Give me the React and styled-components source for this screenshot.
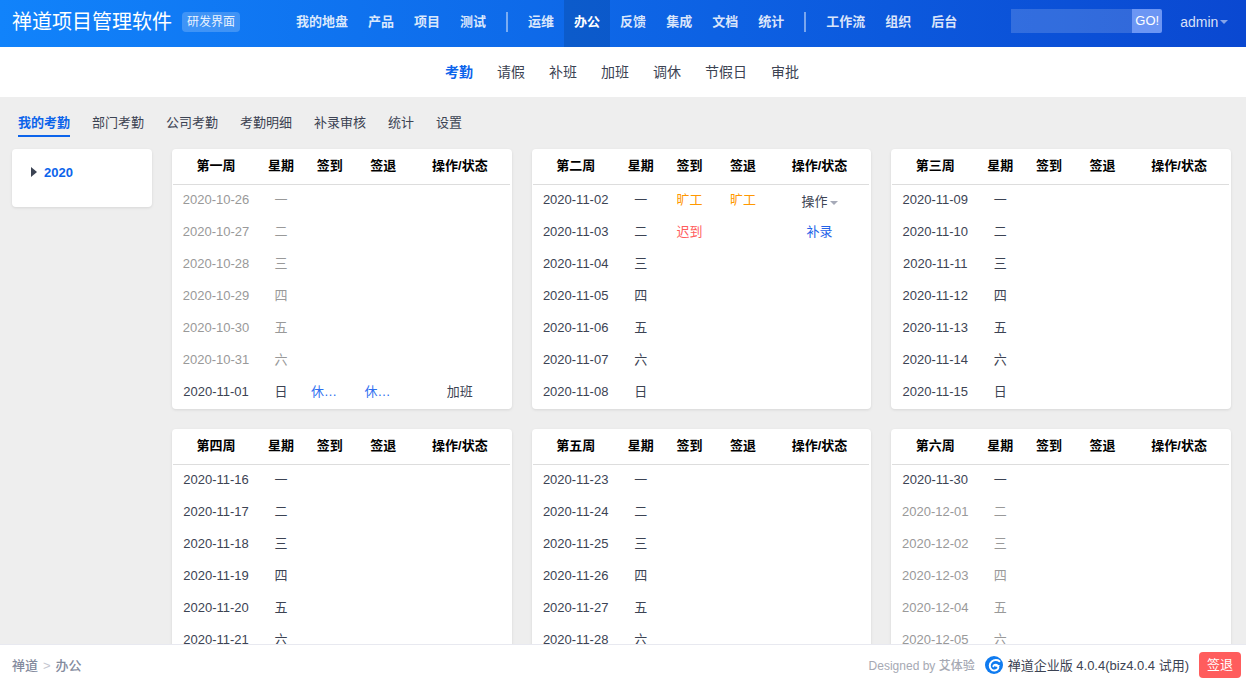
import React from "react";
import styled, { createGlobalStyle } from "styled-components";

const GlobalStyle = createGlobalStyle`
  html, body {
    margin: 0;
    height: 100%;
    overflow: hidden;
  }
  body {
    font-family: "Liberation Sans", "Noto Sans CJK SC", sans-serif;
    font-size: 13px;
    color: #3c4353;
    background: #eee;
  }
`;

const mainNav = [
  ["我的地盘", "产品", "项目", "测试"],
  ["运维", "办公", "反馈", "集成", "文档", "统计"],
  ["工作流", "组织", "后台"],
];
const subNav = ["考勤", "请假", "补班", "加班", "调休", "节假日", "审批"];
const tabs = ["我的考勤", "部门考勤", "公司考勤", "考勤明细", "补录审核", "统计", "设置"];
const weekdays = ["一", "二", "三", "四", "五", "六", "日"];
const weekNames = ["第一周", "第二周", "第三周", "第四周", "第五周", "第六周"];

const marks = {
  "2020-11-01": { in: "休息日", out: "休息日", tone: "rest", action: "加班" },
  "2020-11-02": { in: "旷工", out: "旷工", tone: "absent", menu: true },
  "2020-11-03": { in: "迟到", inTone: "late", link: "补录" },
};

const dateAt = (offset) => {
  const d = new Date(Date.UTC(2020, 9, 26 + offset));
  return d.toISOString().slice(0, 10);
};

function App() {
  return (
    <Page>
      <GlobalStyle />
      <Header>
        <Brand>禅道项目管理软件</Brand>
        <Badge>研发界面</Badge>
        <MainNav>
          {mainNav.map((group, i) => (
            <React.Fragment key={i}>
              {i > 0 && <NavDivider />}
              {group.map((item) => (
                <NavItem key={item} $active={item === "办公"}>
                  {item}
                </NavItem>
              ))}
            </React.Fragment>
          ))}
        </MainNav>
        <Search>
          <SearchInput />
          <SearchButton>GO!</SearchButton>
        </Search>
        <User>
          admin
          <UserCaret />
        </User>
      </Header>

      <SubNav>
        {subNav.map((item) => (
          <SubNavItem key={item} $active={item === "考勤"}>
            {item}
          </SubNavItem>
        ))}
      </SubNav>

      <Main>
        <Tabs>
          {tabs.map((tab, i) => (
            <Tab key={tab} $active={i === 0}>
              {tab}
            </Tab>
          ))}
        </Tabs>
        <Content>
          <Sidebar>
            <YearArrow />
            <Year>2020</Year>
          </Sidebar>
          <Weeks>
            {weekNames.map((name, w) => (
              <WeekCard key={name}>
                <HeadRow>
                  <span>{name}</span>
                  <span>星期</span>
                  <span>签到</span>
                  <span>签退</span>
                  <span>操作/状态</span>
                </HeadRow>
                {weekdays.map((day, d) => {
                  const offset = w * 7 + d;
                  const date = dateAt(offset);
                  const mark = marks[date] || {};
                  const muted = offset < 6 || offset > 35;
                  return (
                    <Row key={date} $muted={muted}>
                      <span>{date}</span>
                      <span>{day}</span>
                      <Status $tone={mark.inTone || mark.tone}>{mark.in}</Status>
                      <Status $tone={mark.tone}>{mark.out}</Status>
                      <span>
                        {mark.action}
                        {mark.link && <RowLink>{mark.link}</RowLink>}
                        {mark.menu && (
                          <RowMenu>
                            操作
                            <MenuCaret />
                          </RowMenu>
                        )}
                      </span>
                    </Row>
                  );
                })}
              </WeekCard>
            ))}
          </Weeks>
        </Content>
      </Main>

      <Footer>
        <Crumbs>
          禅道<CrumbSep>&gt;</CrumbSep>办公
        </Crumbs>
        <FooterRight>
          <Designed>
            Designed by <b>艾体验</b>
          </Designed>
          <Version>
            <svg width="18" height="18" viewBox="0 0 18 18">
              <circle cx="9" cy="9" r="9" fill="#0f7bf0" />
              <path
                d="M14.5 5.2C12.6 3.6 9 3.6 6.8 5.4 4.2 7.5 4.1 11.4 6.4 13.4c2 1.700 5.200 1.400 6.500-.6.900-1.500.4-3.300-1.200-3.900-1.300-.5-3 0-3.300 1.300"
                fill="none"
                stroke="#fff"
                strokeWidth="2"
                strokeLinecap="round"
              />
              <path d="M9.500 9h5.500l-1.500 1.800h-3z" fill="#fff" />
            </svg>
            禅道企业版 4.0.4(biz4.0.4 试用)
          </Version>
          <SignOut>签退</SignOut>
        </FooterRight>
      </Footer>
    </Page>
  );
}

const Page = styled.div`
  display: flex;
  flex-direction: column;
  height: 100vh;
  overflow: hidden;
`;

const Header = styled.header`
  flex: none;
  display: flex;
  align-items: center;
  box-sizing: border-box;
  height: 47px;
  padding: 0 0 3px 12px;
  color: #fff;
  background: linear-gradient(90deg, #1183fb, #0a48d1);
`;

const Brand = styled.div`
  font-size: 20px;
  line-height: 28px;
  white-space: nowrap;
`;

const Badge = styled.div`
  margin-left: 10px;
  padding: 0 5px;
  font-size: 12px;
  line-height: 20px;
  border-radius: 4px;
  background: rgba(255, 255, 255, 0.2);
  color: rgba(255, 255, 255, 0.9);
`;

const MainNav = styled.nav`
  display: flex;
  align-items: flex-start;
  height: 47px;
  margin: 0 0 -3px 46px;
`;

const NavItem = styled.a`
  box-sizing: border-box;
  height: 47px;
  padding: 0 10px 3px;
  line-height: 44px;
  font-weight: 700;
  color: ${(p) => (p.$active ? "#fff" : "rgba(255, 255, 255, 0.85)")};
  background: ${(p) => (p.$active ? "rgba(0, 0, 0, 0.12)" : "transparent")};
  white-space: nowrap;
`;

const NavDivider = styled.span`
  width: 2px;
  height: 20px;
  margin: 12px 10px 0;
  background: rgba(255, 255, 255, 0.45);
`;

const Search = styled.div`
  display: flex;
  height: 24px;
  margin: 0 0 2px 44px;
`;

const SearchInput = styled.div`
  width: 121px;
  background: rgba(255, 255, 255, 0.16);
`;

const SearchButton = styled.div`
  width: 30px;
  line-height: 24px;
  text-align: center;
  font-size: 13px;
  border-radius: 0 2px 2px 0;
  background: #6c96f4;
`;

const User = styled.div`
  display: flex;
  align-items: center;
  margin-left: 18px;
  font-size: 14px;
  color: rgba(255, 255, 255, 0.85);
`;

const UserCaret = styled.i`
  margin-left: 2px;
  border: 4px solid transparent;
  border-top-color: rgba(255, 255, 255, 0.5);
  border-bottom: 0;
`;

const SubNav = styled.nav`
  flex: none;
  display: flex;
  justify-content: center;
  gap: 24px;
  height: 50px;
  padding-right: 2px;
  line-height: 50px;
  font-size: 14px;
  background: #fff;
`;

const SubNavItem = styled.a`
  font-weight: ${(p) => (p.$active ? 700 : 400)};
  color: ${(p) => (p.$active ? "#0c64eb" : "#3c4353")};
`;

const Main = styled.main`
  flex: 1;
  min-height: 0;
  overflow: hidden;
  padding: 12px 15px 0 12px;
`;

const Tabs = styled.div`
  display: flex;
  gap: 22px;
  margin-bottom: 12px;
  padding-left: 6px;
`;

const Tab = styled.a`
  padding: 4px 0 2px;
  line-height: 20px;
  font-weight: ${(p) => (p.$active ? 700 : 400)};
  color: ${(p) => (p.$active ? "#0c64eb" : "#3c4353")};
  border-bottom: 2px solid ${(p) => (p.$active ? "#0c64eb" : "transparent")};
`;

const Content = styled.div`
  display: flex;
  align-items: flex-start;
  gap: 20px;
`;

const Card = styled.div`
  border-radius: 4px;
  background: #fff;
  box-shadow: 0 1px 3px rgba(0, 0, 0, 0.1);
`;

const Sidebar = styled(Card)`
  flex: none;
  display: flex;
  align-items: flex-start;
  width: 140px;
  height: 58px;
  box-sizing: border-box;
  padding: 14px 0 0 19px;
`;

const YearArrow = styled.i`
  margin: 4px 7px 0 0;
  border: 5px solid transparent;
  border-left: 6px solid #3c4353;
  border-right: 0;
`;

const Year = styled.a`
  font-weight: 700;
  line-height: 20px;
  color: #0c64eb;
`;

const Weeks = styled.div`
  flex: 1;
  display: grid;
  grid-template-columns: repeat(3, 1fr);
  gap: 20px;
`;

const WeekCard = styled(Card)`
  height: 260px;
  box-sizing: border-box;
  padding: 0 2px 0 1px;
`;

const cells = `
  display: grid;
  grid-template-columns: 86px 44px 53.5px 53.5px 1fr;
  align-items: center;
  text-align: center;
  line-height: 20px;
`;

const HeadRow = styled.div`
  ${cells}
  box-sizing: border-box;
  height: 36px;
  padding-bottom: 2px;
  font-weight: 700;
  color: #000;
  border-bottom: 1px solid #ddd;
`;

const Row = styled.div`
  ${cells}
  box-sizing: border-box;
  height: 32px;
  padding-bottom: 2px;
  color: ${(p) => (p.$muted ? "#999" : "#3c4353")};
`;

const toneColors = {
  rest: "#2f6ff0",
  absent: "#ff9800",
  late: "#ff5d5d",
};

const Status = styled.span`
  padding: 0 8px;
  overflow: hidden;
  white-space: nowrap;
  text-overflow: ellipsis;
  color: ${(p) => toneColors[p.$tone] || "inherit"};
`;

const RowLink = styled.a`
  color: #2463e8;
`;

const RowMenu = styled.a`
  position: relative;
  top: 2px;
`;

const MenuCaret = styled.i`
  display: inline-block;
  margin-left: 2px;
  vertical-align: middle;
  border: 4px solid transparent;
  border-top-color: #a6aab8;
  border-bottom: 0;
`;

const Footer = styled.footer`
  flex: none;
  display: flex;
  align-items: center;
  justify-content: space-between;
  height: 39px;
  padding: 0 5px 0 12px;
  border-top: 1px solid #e8e9f0;
  background: #fff;
`;

const Crumbs = styled.div`
  color: #838a9d;
  font-weight: 500;
`;

const CrumbSep = styled.span`
  margin: 0 5px;
  color: #c4c6cf;
  font-weight: 400;
`;

const FooterRight = styled.div`
  display: flex;
  align-items: center;
`;

const Designed = styled.div`
  font-size: 12px;
  color: #a6a9b3;

  b {
    font-weight: 500;
  }
`;

const Version = styled.div`
  display: flex;
  align-items: center;
  gap: 5px;
  margin-left: 10px;
  font-size: 13px;
  white-space: nowrap;
`;

const SignOut = styled.a`
  margin-left: 10px;
  width: 42px;
  line-height: 26px;
  text-align: center;
  color: #fff;
  border-radius: 4px;
  background: #ff5d5d;
`;

export default App;
